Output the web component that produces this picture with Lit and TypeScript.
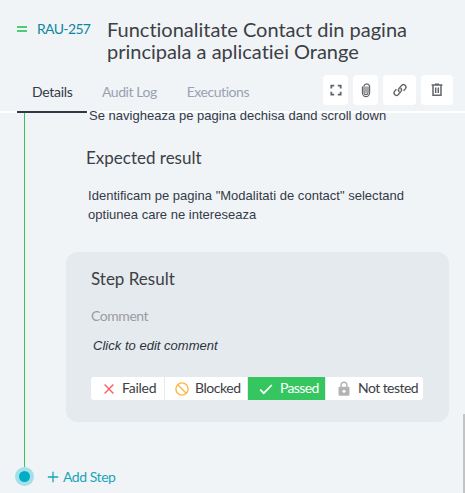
import { LitElement, html, css, svg } from "lit";
import { customElement, property } from "lit/decorators.js";
import { classMap } from "lit/directives/class-map.js";

const icons: Record<string, unknown> = {
  expand: svg`<path d="M3.3 6.4V3.7H6.2M9.8 3.7h2.9v2.7M12.7 9.8v2.8H9.8M6.2 12.6H3.3V9.8" stroke-width="1.8"/>`,
  clip: svg`<path d="M10 4.6v6a2 2 0 0 1-4 0V4a2.9 2.9 0 0 1 5.6 0v7a3.6 3.6 0 0 1-7.2 0V4.6M8 4.4v6.4" stroke-width="1.15"/>`,
  link: svg`<path d="M7.4 9.9a2.5 2.5 0 0 1-.3-3.5l2.7-3.1a2.5 2.5 0 0 1 3.7 3.3l-1.9 2.2M8.6 6.1a2.5 2.5 0 0 1 .3 3.5l-2.7 3.1a2.5 2.5 0 0 1-3.7-3.3l1.9-2.2" stroke-width="1.4"/>`,
  trash: svg`<path d="M2.6 3h10.8M4 3v10.2h8V3M6.7 5.4v5.6M9.3 5.4v5.6M6 2.3h4" stroke-width="1.5"/>`,
  cross: svg`<path d="M3.6 3.6l8.8 8.8M12.4 3.6l-8.8 8.8" stroke-width="1.4"/>`,
  ban: svg`<circle cx="8" cy="8" r="6.1" stroke-width="1.4"/><path d="M3.8 3.8l8.4 8.4" stroke-width="1.4"/>`,
  check: svg`<path d="M2.2 8.6l3.6 3.6 8-8.2" stroke-width="1.7"/>`,
  lock: svg`<path d="M5.1 6.5V4.2a2.9 2.9 0 0 1 5.8 0v2.3" stroke-width="1.4"/><path d="M3.7 5.8h8.6a1.2 1.2 0 0 1 1.2 1.2v6.6a1.2 1.2 0 0 1-1.2 1.2H3.7a1.2 1.2 0 0 1-1.2-1.2V7a1.2 1.2 0 0 1 1.2-1.2z" fill="currentColor" stroke="none"/><circle cx="8" cy="10.2" r="1.5" fill="#fff" stroke="none"/>`,
  plus: svg`<path d="M8 2.8v10.4M2.8 8h10.4" stroke-width="1.3"/>`,
};

@customElement("ui-icon")
export class UiIcon extends LitElement {
  @property() name = "";
  static styles = css`
    :host { display: block; width: 16px; height: 16px; flex: none; }
    svg { display: block; fill: none; stroke: currentColor; }
  `;
  render() {
    return html`<svg width="16" height="16" viewBox="0 0 16 16">${icons[this.name]}</svg>`;
  }
}

@customElement("app-root")
export class AppRoot extends LitElement {
  static styles = css`
    :host {
      display: flex; flex-direction: column; width: 465px; height: 493px;
      overflow: hidden; background: #f0f4f7; color: #3c4045;
      font-family: Lato, sans-serif; font-size: 14px;
      letter-spacing: -0.45px; font-variant-ligatures: none;
    }
    * { box-sizing: border-box; }
    header { height: 113px; flex: none; border-bottom: 2px solid #fff; }
    .heading { display: flex; height: 62px; padding: 18px 0 0 17px; }
    .priority { width: 10px; height: 6px; margin-top: 8px; border: solid #4ecb78; border-width: 2px 0; }
    .key { width: 70px; padding-left: 10px; line-height: 22px; color: #0f86a0; white-space: nowrap; letter-spacing: -0.65px; }
    h1 { margin: 0; padding-left: 10px; font-size: 20px; font-weight: 400; line-height: 22px; white-space: nowrap; letter-spacing: -0.01px; }
    .bar { display: flex; height: 51px; padding: 0 12px 0 17px; justify-content: space-between; }
    .tabs { display: flex; }
    .tab { height: 51px; padding: 20px 15px 0; line-height: 20px; color: #9aa1b1; white-space: nowrap; }
    .tab.on { color: #353a47; border-bottom: 2px solid #333746; width: 70px; letter-spacing: -0.3px; }
    .tools { display: flex; gap: 5px; padding-top: 13px; }
    .tool { display: flex; align-items: center; justify-content: center; height: 30px; width: 25px; border-radius: 4px; background: #fff; color: #62666c; }
    .tool.link { width: 33px; }
    .tool.trash { width: 32px; }
    .body { display: flex; flex: 1; min-height: 0; position: relative; }
    .rail { display: flex; flex-direction: column; align-items: center; width: 49px; flex: none; }
    .line { width: 1px; height: 354px; background: #35c660; }
    .dot { width: 19px; height: 19px; border-radius: 50%; border: 4px solid #a5e0e8; background: #00adc6; }
    .content { width: 400px; padding-left: 17px; }
    p { margin: 0; font: 13px/19px "Liberation Sans", Arial, sans-serif; letter-spacing: 0.02px; color: #343a48; white-space: nowrap; }
    .step { margin: -7px 0 0 23px; }
    .sub { margin: 0; font-size: 17px; font-weight: 400; line-height: 22px; letter-spacing: 0; }
    .expected { margin: 22px 0 0 20px; }
    .desc { margin: 17px 0 0 22px; }
    .card { width: 383px; height: 170px; margin-top: 28px; padding: 16px 25px; border-radius: 12px; background: #e5eaee; }
    .label { margin-top: 16px; line-height: 20px; color: #999ca2; }
    .card p { margin: 10px 0 0 2px; font-style: italic; color: #2d323c; }
    .choices { display: inline-flex; gap: 1px; margin-top: 22px; border-radius: 3px; overflow: hidden; }
    .choice { display: flex; align-items: center; height: 23px; padding-left: 10px; gap: 5px; background: #fff; white-space: nowrap; }
    .choice span { line-height: 17px; padding-bottom: 2px; }
    .choice.failed { width: 73px; letter-spacing: -0.25px; }
    .choice.blocked { width: 82px; padding-left: 9px; }
    .choice.passed { width: 77px; gap: 6px; background: #35c660; color: #fff; letter-spacing: -0.65px; }
    .choice.untested { width: 97px; gap: 6px; letter-spacing: -0.55px; }
    .failed ui-icon { color: #ff5c64; }
    .blocked ui-icon { color: #ffb63f; }
    .untested ui-icon { color: #b3b3b3; }
    .add { display: flex; align-items: center; gap: 2px; height: 20px; margin: 45px 0 0 -21px; color: #1aa5ba; }
    .add span { line-height: 17px; padding-bottom: 2px; }
    .scroll { position: absolute; right: 0; top: 301px; width: 2px; height: 79px; background: #c1c3c5; }
  `;
  render() {
    const tabs = ["Details", "Audit Log", "Executions"];
    const choices = [
      ["failed", "cross", "Failed"],
      ["blocked", "ban", "Blocked"],
      ["passed", "check", "Passed"],
      ["untested", "lock", "Not tested"],
    ];
    return html`
      <header>
        <div class="heading">
          <div class="priority"></div>
          <div class="key">RAU-257</div>
          <h1>Functionalitate Contact din pagina<br />principala a aplicatiei Orange</h1>
        </div>
        <div class="bar">
          <div class="tabs">
            ${tabs.map((t, i) => html`<div class=${classMap({ tab: true, on: i === 0 })}>${t}</div>`)}
          </div>
          <div class="tools">
            ${["expand", "clip", "link", "trash"].map(
              (n) => html`<div class="tool ${n}"><ui-icon name=${n}></ui-icon></div>`
            )}
          </div>
        </div>
      </header>
      <div class="body">
        <div class="rail"><div class="line"></div><div class="dot"></div></div>
        <div class="content">
          <p class="step">Se navigheaza pe pagina dechisa dand scroll down</p>
          <h2 class="sub expected">Expected result</h2>
          <p class="desc">Identificam pe pagina "Modalitati de contact" selectand<br />optiunea care ne intereseaza</p>
          <section class="card">
            <h2 class="sub">Step Result</h2>
            <div class="label">Comment</div>
            <p>Click to edit comment</p>
            <div class="choices">
              ${choices.map(
                ([c, icon, label]) => html`<div class="choice ${c}"><ui-icon name=${icon}></ui-icon><span>${label}</span></div>`
              )}
            </div>
          </section>
          <div class="add"><ui-icon name="plus"></ui-icon><span>Add Step</span></div>
        </div>
        <div class="scroll"></div>
      </div>
    `;
  }
}
